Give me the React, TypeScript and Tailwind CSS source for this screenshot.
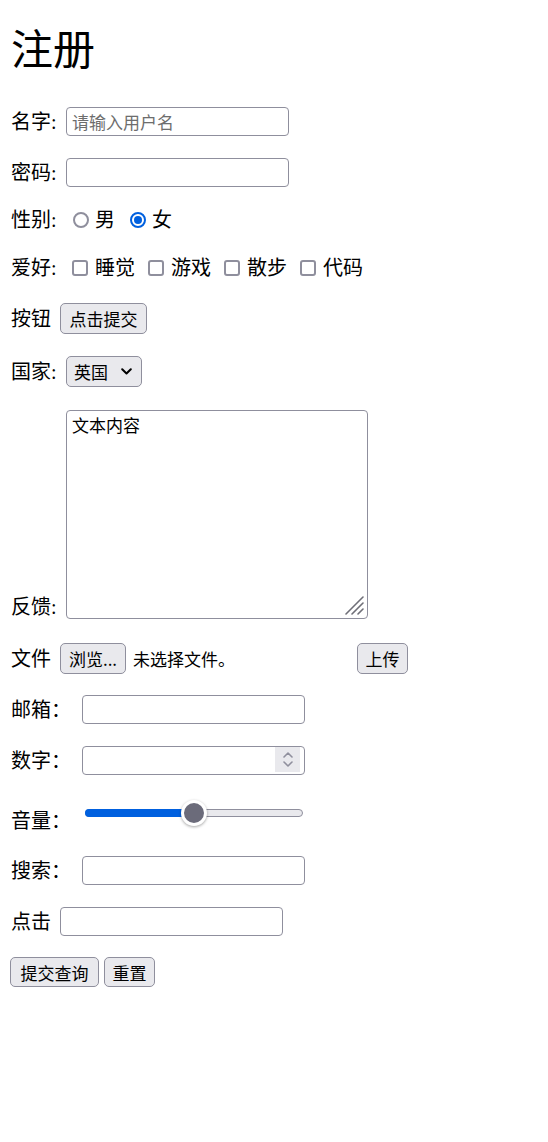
import React from "react";

const ctl = "font-['Noto_Sans_CJK_SC',sans-serif] text-[17px] text-black";
const btn =
  "box-border flex shrink-0 items-center justify-center rounded-[5px] border border-[#8f8f9d] bg-[#e9e9ed] p-0 leading-none font-['Noto_Sans_CJK_SC',sans-serif] text-[17px] text-black";
const box = "box-border h-[29px] w-[223px] shrink-0 rounded-[4px] border border-[#8f8f9d] bg-white";

function Radio({ checked }: { checked?: boolean }) {
  if (checked) {
    return (
      <span className="box-border flex h-[16px] w-[16px] shrink-0 items-center justify-center rounded-full border-2 border-[#0060df] bg-white">
        <span className="h-[8px] w-[8px] rounded-full bg-[#0060df]" />
      </span>
    );
  }
  return <span className="box-border h-[16px] w-[16px] shrink-0 rounded-full border-2 border-[#8f8f9d] bg-white" />;
}

function Check() {
  return <span className="box-border h-[16px] w-[16px] shrink-0 rounded-[3px] border-2 border-[#8f8f9d] bg-white" />;
}

export default function App() {
  return (
    <div className="min-h-[1142px] bg-white px-[10px] text-[20px] text-black font-['Liberation_Serif','Noto_Sans_CJK_SC',serif]">
      <h1 className="pl-[1px] pt-[31px] text-[42px] leading-[41px] font-normal">注册</h1>

      {/* 名字 */}
      <div className="mt-[35px] flex h-[29px] items-center">
        <span className="w-[56px] shrink-0 pl-[1px] leading-[28px]">名字:</span>
        <div className={`${box} flex items-center pl-[5px] font-['Noto_Sans_CJK_SC',sans-serif] text-[17px] text-[#6d6d6d]`}>
          请输入用户名
        </div>
      </div>

      {/* 密码 */}
      <div className="mt-[22px] flex h-[29px] items-center">
        <span className="w-[56px] shrink-0 pl-[1px] leading-[28px]">密码:</span>
        <div className={box} />
      </div>

      {/* 性别 */}
      <div className="mt-[19px] flex h-[28px] items-center">
        <span className="w-[63px] shrink-0 pl-[1px] leading-[28px]">性别:</span>
        <Radio />
        <span className="ml-[6px] leading-[28px]">男</span>
        <span className="ml-[15px] flex">
          <Radio checked />
        </span>
        <span className="ml-[6px] leading-[28px]">女</span>
      </div>

      {/* 爱好 */}
      <div className="mt-[20px] flex h-[28px] items-center">
        <span className="w-[62px] shrink-0 pl-[1px] leading-[28px]">爱好:</span>
        <Check />
        <span className="ml-[7px] w-[40px] leading-[28px]">睡觉</span>
        <span className="ml-[13px] flex">
          <Check />
        </span>
        <span className="ml-[7px] w-[40px] leading-[28px]">游戏</span>
        <span className="ml-[13px] flex">
          <Check />
        </span>
        <span className="ml-[7px] w-[40px] leading-[28px]">散步</span>
        <span className="ml-[13px] flex">
          <Check />
        </span>
        <span className="ml-[7px] w-[40px] leading-[28px]">代码</span>
      </div>

      {/* 按钮 */}
      <div className="mt-[21px] flex h-[31px] items-center">
        <span className="w-[50px] shrink-0 pl-[1px] leading-[28px]">按钮</span>
        <button className={`${btn} h-[31px] w-[87px]`}>点击提交</button>
      </div>

      {/* 国家 */}
      <div className="mt-[22px] flex h-[31px] items-center">
        <span className="w-[56px] shrink-0 pl-[1px] leading-[28px]">国家:</span>
        <div className="box-border flex h-[31px] w-[76px] items-center rounded-[5px] border border-[#8f8f9d] bg-[#e9e9ed] pl-[7px] pr-[9px]">
          <span className={ctl}>英国</span>
          <svg className="ml-auto" width="11" height="7" viewBox="0 0 11 7">
            <path d="M1.2 1.2 L5.5 5.5 L9.8 1.2" fill="none" stroke="#000" strokeWidth="2" strokeLinecap="round" strokeLinejoin="round" />
          </svg>
        </div>
      </div>

      {/* 反馈 */}
      <div className="mt-[23px] flex h-[209px] items-end">
        <span className="w-[56px] shrink-0 pl-[1px] leading-[24px]">反馈:</span>
        <div className="relative box-border h-[209px] w-[302px] shrink-0 rounded-[4px] border border-[#8f8f9d] bg-white px-[5px] pt-[3px]">
          <div className={`${ctl} leading-[22px]`}>文本内容</div>
          <svg className="absolute bottom-[3px] right-[3px]" width="21" height="21" viewBox="0 0 21 21">
            <path d="M20 3 L3 20 M20 9 L9 20 M20 15 L15 20" stroke="#6f6f78" strokeWidth="1.6" strokeLinecap="round" />
          </svg>
        </div>
      </div>

      {/* 文件 */}
      <div className="mt-[24px] flex h-[31px] items-center">
        <span className="w-[50px] shrink-0 pl-[1px] leading-[28px]">文件</span>
        <button className={`${btn} h-[31px] w-[66px]`}>浏览...</button>
        <span className={`${ctl} w-[231px] shrink-0 pl-[7px] leading-[28px]`}>未选择文件。</span>
        <button className={`${btn} h-[31px] w-[51px]`}>上传</button>
      </div>

      {/* 邮箱 */}
      <div className="mt-[21px] flex h-[29px] items-center">
        <span className="w-[72px] shrink-0 pl-[1px] leading-[28px]">邮箱：</span>
        <div className={box} />
      </div>

      {/* 数字 */}
      <div className="mt-[22px] flex h-[29px] items-center">
        <span className="w-[72px] shrink-0 pl-[1px] leading-[28px]">数字：</span>
        <div className={`${box} relative`}>
          <div className="absolute right-[4px] top-0 flex h-[25px] w-[25px] flex-col items-center justify-center gap-[3px] bg-[#e9e9ed]">
            <svg width="10" height="6" viewBox="0 0 10 6">
              <path d="M1 5 L5 1 L9 5" fill="none" stroke="#8f8f9d" strokeWidth="1.6" strokeLinecap="round" strokeLinejoin="round" />
            </svg>
            <svg width="10" height="6" viewBox="0 0 10 6">
              <path d="M1 1 L5 5 L9 1" fill="none" stroke="#8f8f9d" strokeWidth="1.6" strokeLinecap="round" strokeLinejoin="round" />
            </svg>
          </div>
        </div>
      </div>

      {/* 音量 */}
      <div className="mt-[22px] flex items-start">
        <span className="mt-[10px] w-[75px] shrink-0 pl-[1px] leading-[28px]">音量：</span>
        <div className="relative mt-[3px] flex h-[26px] w-[218px] shrink-0 items-center">
          <div className="relative box-border h-[8px] w-full rounded-full border border-[#8f8f9d] bg-[#e9e9ed]">
            <div className="absolute left-[-1px] top-[-1px] h-[8px] w-[110px] rounded-full bg-[#0060df]" />
          </div>
          <div className="absolute left-[96px] top-0 box-border h-[26px] w-[26px] rounded-full border-[3px] border-white bg-[#6b6b7a] shadow-[0_1px_3px_rgba(0,0,0,0.35)]" />
        </div>
      </div>

      {/* 搜索 */}
      <div className="mt-[21px] flex h-[29px] items-center">
        <span className="w-[72px] shrink-0 pl-[1px] leading-[28px]">搜索：</span>
        <div className={box} />
      </div>

      {/* 点击 */}
      <div className="mt-[22px] flex h-[29px] items-center">
        <span className="w-[50px] shrink-0 pl-[1px] leading-[28px]">点击</span>
        <div className={box} />
      </div>

      {/* buttons */}
      <div className="mt-[21px] flex h-[30px] items-center">
        <button className={`${btn} h-[30px] w-[89px]`}>提交查询</button>
        <button className={`${btn} ml-[5px] h-[30px] w-[51px]`}>重置</button>
      </div>
    </div>
  );
}
